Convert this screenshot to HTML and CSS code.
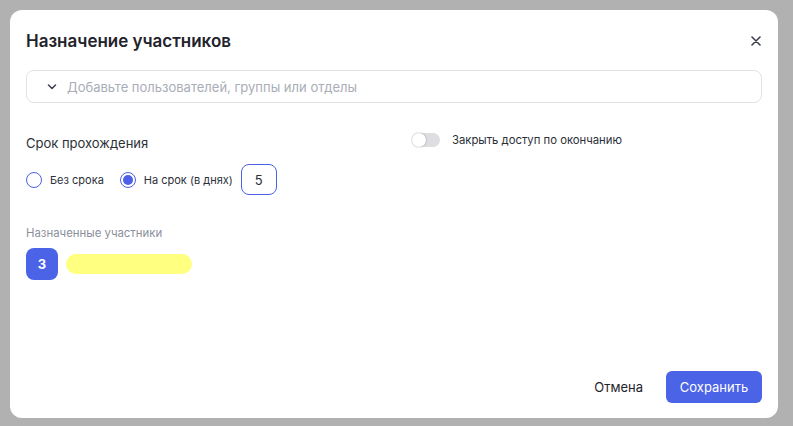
FILE: index.html
```html
<!DOCTYPE html>
<html lang="ru">
<head>
    <meta charset="UTF-8">
    <meta name="viewport" content="width=device-width, initial-scale=1.0">
    <title>Назначение участников</title>
    <link rel="stylesheet" href="styles.css">
</head>
<body>
    <div class="modal">
        <div class="modal-header">
            <h2>Назначение участников</h2>
            <button class="close-btn" type="button" aria-label="Закрыть">
                <svg width="10" height="10" viewBox="0 0 10 10">
                    <path d="M1 1 L9 9 M9 1 L1 9" stroke="#3a3f4a" stroke-width="1.6" stroke-linecap="round"/>
                </svg>
            </button>
        </div>

        <div class="select-box">
            <svg class="chevron" width="10" height="6" viewBox="0 0 10 6">
                <path d="M1.5 1 L5 4.5 L8.5 1" fill="none" stroke="#3a3f4a" stroke-width="1.5" stroke-linecap="round" stroke-linejoin="round"/>
            </svg>
            <span class="placeholder">Добавьте пользователей, группы или отделы</span>
        </div>

        <div class="settings">
            <div class="term">
                <div class="term-title">Срок прохождения</div>
                <div class="radio-row">
                    <label class="radio">
                        <span class="radio-circle"></span>
                        Без срока
                    </label>
                    <label class="radio">
                        <span class="radio-circle checked"></span>
                        На срок (в днях)
                    </label>
                    <div class="days-input">5</div>
                </div>
            </div>
            <label class="switch-row">
                <span class="switch"><span class="knob"></span></span>
                Закрыть доступ по окончанию
            </label>
        </div>

        <div class="assigned">
            <div class="assigned-title">Назначенные участники</div>
            <div class="assigned-row">
                <span class="count">3</span>
                <span class="mark"></span>
            </div>
        </div>

        <div class="modal-footer">
            <button type="button" class="btn-cancel">Отмена</button>
            <button type="button" class="btn-save">Сохранить</button>
        </div>
    </div>
</body>
</html>
```

FILE: styles.css
```css
body {
    font-family: Inter, "Noto Sans", sans-serif;
    background-color: #b1b1b1;
    margin: 0;
    padding: 10px 15px 8px 10px;
    height: 426px;
    box-sizing: border-box;
    color: #2b2f38;
}
.modal {
    background-color: white;
    border-radius: 12px;
    height: 100%;
    box-sizing: border-box;
    padding: 20px 16px 15px 16px;
    display: flex;
    flex-direction: column;
}
.modal-header {
    display: flex;
    align-items: center;
    justify-content: space-between;
    height: 22px;
    margin-bottom: 18px;
}
.modal-header h2 {
    margin: 0;
    font-size: 17px;
    line-height: 22px;
    font-weight: 600;
    color: #1f232b;
}
.close-btn {
    background: none;
    border: none;
    padding: 0;
    margin-right: 1px;
    display: flex;
    cursor: pointer;
}
.select-box {
    display: flex;
    align-items: center;
    height: 33px;
    box-sizing: border-box;
    border: 1px solid #e3e3e6;
    border-radius: 8px;
    padding-left: 20px;
}
.chevron {
    margin-right: 10px;
}
.placeholder {
    font-size: 13px;
    color: #a9adb8;
}
.settings {
    display: flex;
    align-items: flex-start;
    margin-top: 31px;
}
.term {
    width: 386px;
}
.term-title {
    font-size: 13px;
    line-height: 18px;
    color: #2b2f38;
}
.radio-row {
    display: flex;
    align-items: center;
    margin-top: 12px;
}
.radio {
    display: flex;
    align-items: center;
    font-size: 11px;
    margin-right: 16px;
}
.radio:nth-child(2) {
    margin-right: 8px;
}
.radio-circle {
    width: 16px;
    height: 16px;
    box-sizing: border-box;
    border: 1.5px solid #4c60e6;
    border-radius: 50%;
    margin-right: 8px;
    display: flex;
    align-items: center;
    justify-content: center;
}
.radio-circle.checked::after {
    content: "";
    width: 10px;
    height: 10px;
    border-radius: 50%;
    background-color: #4c60e6;
}
.days-input {
    width: 36px;
    height: 31px;
    box-sizing: border-box;
    border: 1px solid #4c60e6;
    border-radius: 8px;
    display: flex;
    align-items: center;
    justify-content: center;
    font-size: 13px;
}
.switch-row {
    display: flex;
    align-items: center;
    font-size: 11.3px;
    height: 18px;
    margin-top: -3px;
}
.switch {
    width: 28px;
    height: 14px;
    border-radius: 7px;
    background-color: #dedee2;
    margin-right: 12px;
    display: flex;
    align-items: center;
}
.knob {
    width: 14px;
    height: 14px;
    border-radius: 50%;
    background-color: white;
    box-shadow: 0 0 2px rgba(0, 0, 0, 0.35);
}
.assigned {
    margin-top: 31px;
}
.assigned-title {
    font-size: 11.4px;
    line-height: 14px;
    color: #8b8f9c;
}
.assigned-row {
    display: flex;
    align-items: center;
    margin-top: 8px;
}
.count {
    width: 32px;
    height: 32px;
    border-radius: 8px;
    background-color: #4b63e6;
    color: white;
    font-size: 13px;
    font-weight: 700;
    display: flex;
    align-items: center;
    justify-content: center;
    margin-right: 8px;
}
.mark {
    width: 126px;
    height: 20px;
    border-radius: 10px;
    background-color: #ffff80;
}
.modal-footer {
    margin-top: auto;
    display: flex;
    justify-content: flex-end;
    align-items: center;
    gap: 23px;
}
.btn-cancel {
    background: none;
    border: none;
    font-family: inherit;
    font-size: 13px;
    color: #1f232b;
    padding: 0;
    cursor: pointer;
}
.btn-save {
    height: 32px;
    width: 96px;
    padding: 0;
    background-color: #4b63e6;
    color: white;
    border: none;
    border-radius: 6px;
    font-family: inherit;
    font-size: 13px;
    cursor: pointer;
}
.btn-save:hover {
    background-color: #3c52cc;
}
```
